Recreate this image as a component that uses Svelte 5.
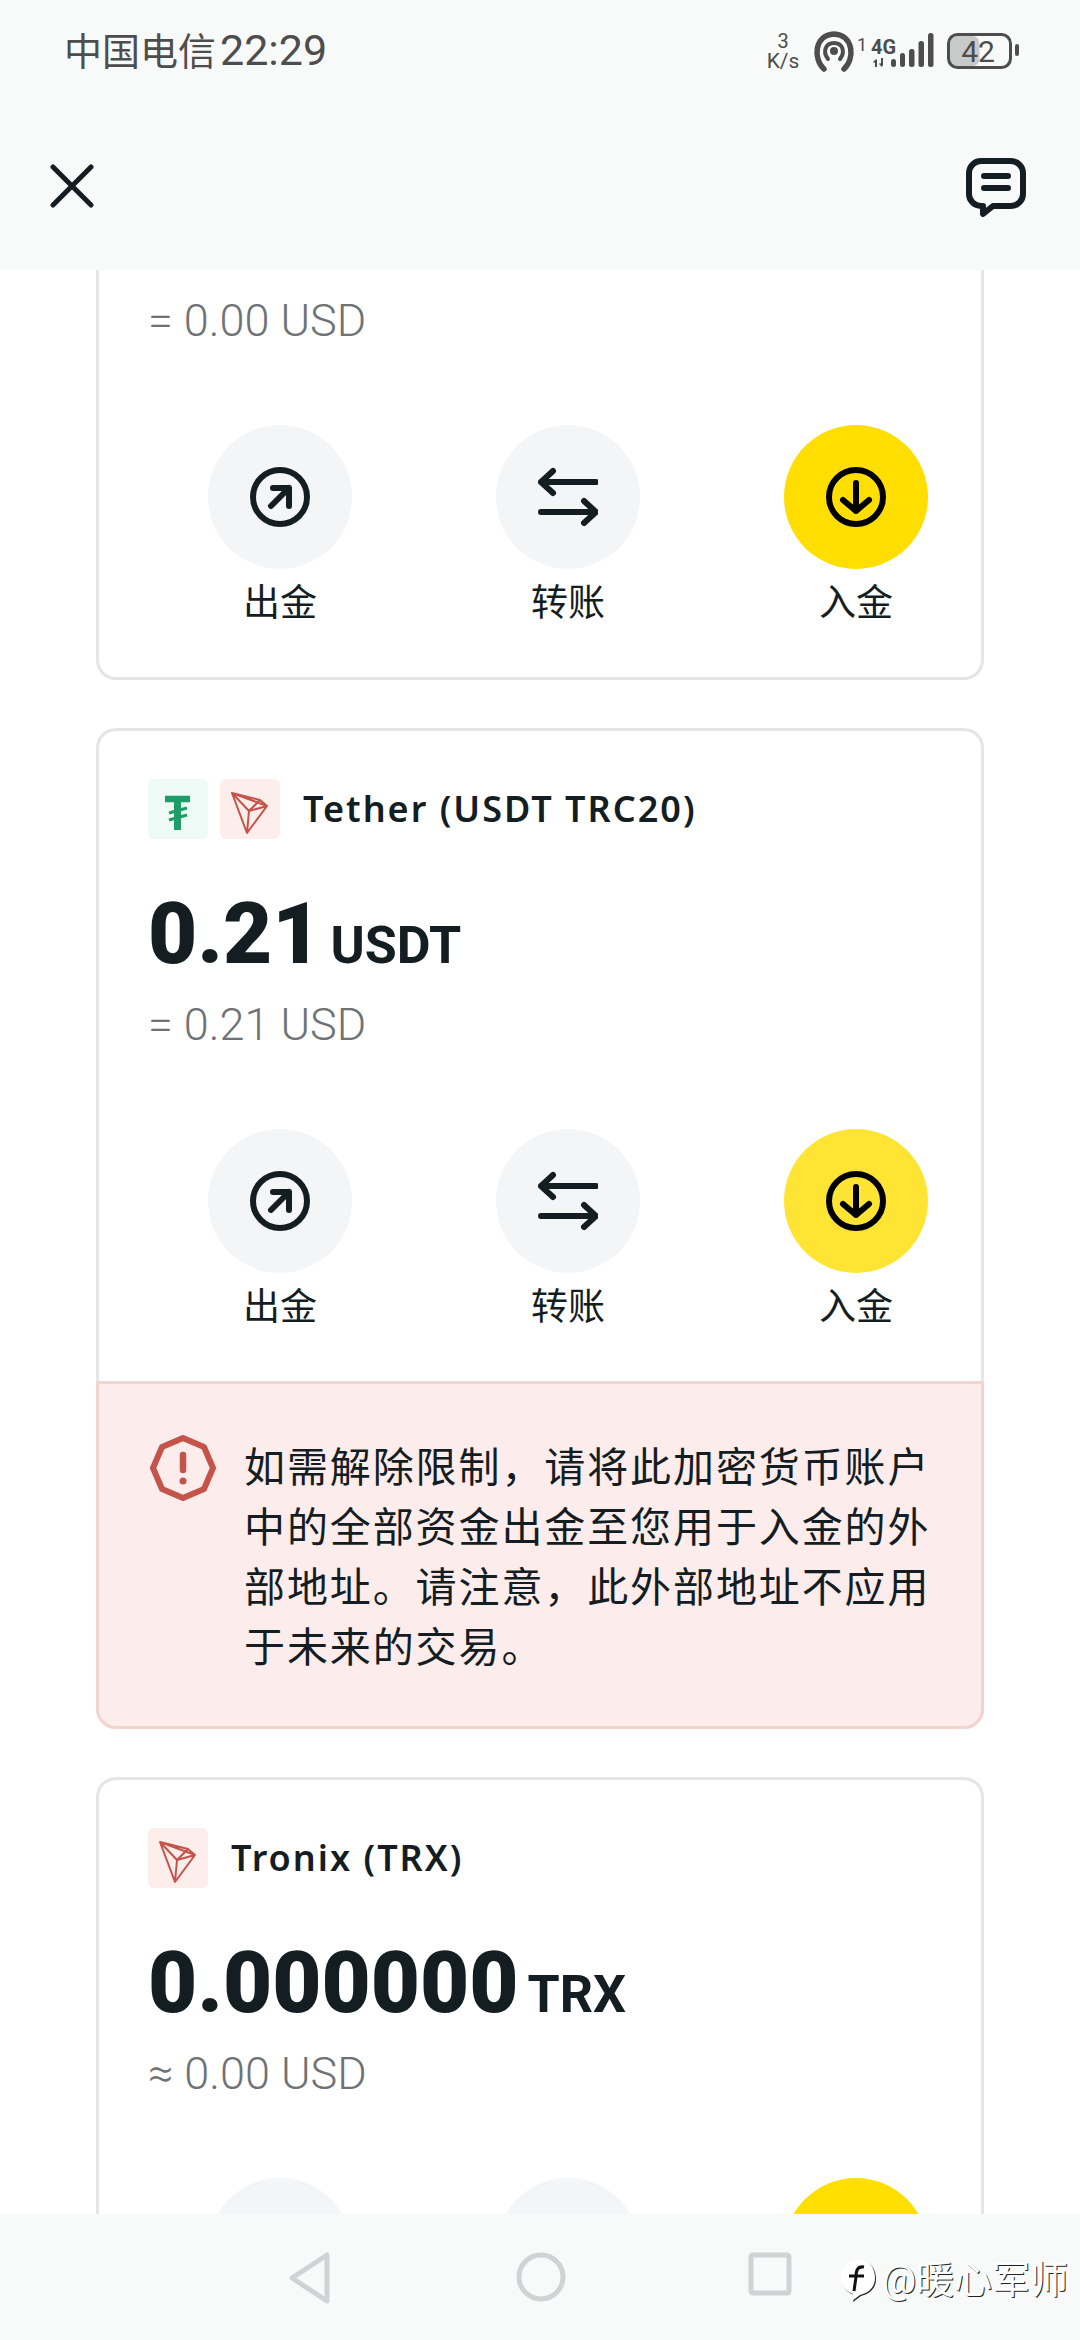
<script>
  const actions = [
    { label: '出金', kind: 'out' },
    { label: '转账', kind: 'swap' },
    { label: '入金', kind: 'in' }
  ];
</script>

{#snippet row(soft)}
  <div class="actions">
    {#each actions as a}
      <div class="action">
        <div class="circle" class:yellow={a.kind === 'in'} class:soft={a.kind === 'in' && soft}>
          <svg width="60" height="60" viewBox="0 0 60 60" fill="none" stroke={a.kind === 'in' ? '#000' : '#141d22'} stroke-width="6" stroke-linecap="round" stroke-linejoin="round">
            {#if a.kind === 'out'}
              <circle cx="30" cy="30" r="27" />
              <path d="M21 39 39 21M23 21h16v18" />
            {:else if a.kind === 'swap'}
              <path d="M3 15h55M15 4 3 15l12 11M58 45H3M46 34l12 11-12 11" />
            {:else}
              <circle cx="30" cy="30" r="27" />
              <path d="M30 16v28M17 33l13 11 13-11" />
            {/if}
          </svg>
        </div>
        <div class="label">{a.label}</div>
      </div>
    {/each}
  </div>
{/snippet}

{#snippet tron()}
  <div class="tile red">
    <svg width="60" height="60" viewBox="0 0 60 60" fill="none" stroke="#c4534a" stroke-width="2" stroke-linejoin="round">
      <path d="M12 14 47 27 27 54ZM12 14 29 32 27 54M29 32 47 27M29 32 40 21M12 14 40 21 47 27" />
    </svg>
  </div>
{/snippet}

<div class="page">
  <header class="top">
    <div class="status">
      <div class="carrier"><span class="cn">中国电信</span><span class="time">22:29</span></div>
      <svg class="sys" width="270" height="50" viewBox="0 0 270 50">
        <g fill="#4d4d4d" font-family="Roboto, sans-serif">
          <text x="32" y="19" font-size="20" text-anchor="middle">3</text>
          <text x="32" y="39" font-size="21" text-anchor="middle">K/s</text>
          <text x="106" y="22" font-size="18">1</text>
          <text x="120" y="25" font-size="20" font-weight="700" textLength="25" lengthAdjust="spacingAndGlyphs">4G</text>
          <text x="227" y="33" font-size="30" text-anchor="middle">42</text>
        </g>
        <g fill="none" stroke="#4d4d4d">
          <path d="M73 40C62 30 63 6 83 5 103 6 104 30 93 40" stroke-width="5.5" stroke-linecap="round" />
          <path d="M77 30C71 22 75 14 83 14 91 14 95 22 89 30" stroke-width="4" stroke-linecap="round" />
          <rect x="197.500" y="5.500" width="62" height="33" rx="9" stroke-width="3" />
        </g>
        <g fill="#4d4d4d">
          <circle cx="83" cy="22" r="4" />
          <rect x="140" y="30" width="5" height="8" rx="2.500" />
          <rect x="149" y="24" width="5" height="14" rx="2.500" />
          <rect x="158" y="20" width="5.500" height="18" rx="2.500" />
          <rect x="167.500" y="12" width="5.500" height="26" rx="2.500" />
          <rect x="177" y="4" width="5.500" height="34" rx="2.500" />
          <rect x="264" y="15" width="4" height="12" rx="2" />
          <path d="M124 31h2v7h-2zM122 33l3-3 1 1-3 3zM130 29h2v7h-2zM132 36l-1 2-3-3 1-1z" />
        </g>
        <rect x="199" y="7" width="29.500" height="30" rx="7" fill="#4d4d4d" opacity=".28" />
      </svg>
    </div>
    <div class="bar">
      <svg width="44" height="44" viewBox="0 0 44 44" fill="none" stroke="#141d22" stroke-width="5" stroke-linecap="round">
        <path d="M3 3 41 41M41 3 3 41" />
      </svg>
      <svg width="60" height="60" viewBox="0 0 60 60" fill="none">
        <path d="M15 3h30a12 12 0 0 1 12 12v21a12 12 0 0 1-12 12H27L17 56v-8h-2a12 12 0 0 1-12-12V15A12 12 0 0 1 15 3Z" stroke="#141d22" stroke-width="6" stroke-linejoin="round" />
        <rect x="15" y="15" width="30" height="6" rx="3" fill="#141d22" />
        <rect x="15" y="27" width="30" height="6" rx="3" fill="#141d22" />
      </svg>
    </div>
  </header>

  <main class="list">
    <section class="card clipped">
      <div class="body first">
        <div class="sub">= 0.00 USD</div>
        {@render row(false)}
      </div>
    </section>

    <section class="card joined">
      <div class="body">
        <div class="title-row">
          <div class="tile green">
            <svg width="60" height="60" viewBox="0 0 60 60" fill="none" stroke="#1f9d68">
              <path d="M17 20h25" stroke-width="6.500" />
              <path d="M29.500 20v31" stroke-width="7" />
              <path d="M21 34 39 29M21 41 39 36" stroke-width="3" />
            </svg>
          </div>
          {@render tron()}
          <h2 class="name">Tether (USDT TRC20)</h2>
        </div>
        <div class="amount"><b>0.21</b> <span>USDT</span></div>
        <div class="sub">= 0.21 USD</div>
        {@render row(true)}
      </div>
      <div class="alert">
        <svg class="warn" width="66" height="66" viewBox="0 0 66 66" fill="none" stroke="#c4534a" stroke-width="6" stroke-linejoin="round">
          <path d="M33 3 54 12 63 33 54 54 33 63 12 54 3 33 12 12Z" />
          <path d="M33 20V35" stroke-linecap="round" stroke-width="6.500" />
          <circle cx="33" cy="46" r="3.500" fill="#c4534a" stroke="none" />
        </svg>
        <p>如需解除限制，请将此加密货币账户中的全部资金出金至您用于入金的外部地址。请注意，此外部地址不应用于未来的交易。</p>
      </div>
    </section>

    <section class="card">
      <div class="body">
        <div class="title-row">
          {@render tron()}
          <h2 class="name">Tronix (TRX)</h2>
        </div>
        <div class="amount"><b>0.000000</b> <span>TRX</span></div>
        <div class="sub">≈ 0.00 USD</div>
        {@render row(false)}
      </div>
    </section>
  </main>

  <nav class="nav">
    <svg width="44" height="52" viewBox="0 0 44 52" fill="none" stroke="#d0d3d3" stroke-width="5" stroke-linejoin="round">
      <path d="M39 3V49L4 26Z" />
    </svg>
    <svg width="50" height="50" viewBox="0 0 50 50" fill="none" stroke="#d0d3d3" stroke-width="5">
      <circle cx="25" cy="25" r="22" />
    </svg>
    <svg width="44" height="44" viewBox="0 0 44 44" fill="none" stroke="#d0d3d3" stroke-width="5" stroke-linejoin="round">
      <rect x="3" y="3" width="38" height="38" rx="2" />
    </svg>
    <div class="mark">
      <svg class="bird" width="36" height="44" viewBox="0 0 36 44">
        <path d="M18 2C30 2 35 10 35 20 35 30 28 35 20 37L12 43 13 36C5 33 1 28 1 19 1 9 8 2 18 2Z" fill="#fff" />
        <path d="M24 9C17 8 16 13 16 19L14 33M9 18H24" fill="none" stroke="#111" stroke-width="3" />
      </svg>
      <span>@暖心军师</span>
    </div>
  </nav>
</div>

<style>
  :global(body) {
    margin: 0;
    background: #fff;
  }

  .page {
    width: 1080px;
    height: 2340px;
    display: flex;
    flex-direction: column;
    overflow: hidden;
    position: relative;
    font-family: Roboto, "Noto Sans CJK SC", sans-serif;
    color: #141d22;
  }

  .top {
    height: 270px;
    flex: none;
    background: #f8fafa;
  }

  .status {
    height: 105px;
    padding: 24px 59px 0 64px;
    box-sizing: border-box;
    display: flex;
    justify-content: space-between;
    align-items: flex-start;
  }

  .carrier {
    font-size: 43px;
    line-height: 52px;
    color: #4d4d4d;
    white-space: nowrap;
  }

  .carrier .cn {
    font-size: 38px;
  }

  .carrier .time {
    margin-left: 4px;
  }

  .sys {
    margin-top: 5px;
  }

  .bar {
    height: 165px;
    padding: 0 54px 0 50px;
    box-sizing: border-box;
    display: flex;
    justify-content: space-between;
    align-items: flex-start;
  }

  .bar svg:first-child {
    margin-top: 59px;
  }

  .bar svg:last-child {
    margin-top: 53px;
  }

  .list {
    flex: 1;
    min-height: 0;
    overflow: hidden;
    padding: 0 96px;
    display: flex;
    flex-direction: column;
    gap: 48px;
  }

  .card {
    flex: none;
    border: 3px solid #e3e5e7;
    border-radius: 20px;
    background: #fff;
  }

  .card.clipped {
    border-top: 0;
    border-top-left-radius: 0;
    border-top-right-radius: 0;
  }

  .body {
    padding: 48px 49px 48px;
  }

  .body.first {
    padding-top: 26px;
  }

  .title-row {
    display: flex;
    align-items: center;
    height: 60px;
    gap: 12px;
  }

  .tile {
    width: 60px;
    height: 60px;
    border-radius: 6px;
  }

  .tile svg {
    display: block;
  }

  .green {
    background: #eefaf5;
  }

  .red {
    background: #fdeeec;
  }

  .name {
    margin: -2px 0 0 11px;
    font-family: "Noto Sans", sans-serif;
    font-size: 36px;
    font-weight: 600;
    letter-spacing: 2px;
    white-space: nowrap;
  }

  .amount {
    height: 100px;
    margin: 45px 0 16px;
    line-height: 100px;
    white-space: nowrap;
    font-weight: 700;
  }

  .amount b {
    font-size: 85px;
  }

  .amount span {
    font-size: 52px;
    margin-left: 5px;
  }

  .sub {
    font-size: 45px;
    line-height: 50px;
    font-weight: 300;
    color: #6f7275;
  }

  .actions {
    margin: 79px 0 0 60px;
    display: grid;
    grid-template-columns: repeat(3, 144px);
    column-gap: 144px;
  }

  .action {
    display: flex;
    flex-direction: column;
    align-items: center;
  }

  .circle {
    width: 144px;
    height: 144px;
    border-radius: 50%;
    background: #f3f5f7;
    display: flex;
    align-items: center;
    justify-content: center;
  }

  .circle.yellow {
    background: #ffde00;
  }

  .circle.soft {
    background: #ffe433;
  }

  .label {
    margin-top: 10px;
    font-size: 37px;
    line-height: 50px;
    white-space: nowrap;
  }

  .joined {
    border-bottom: 0;
  }

  .alert {
    margin: 0 -3px;
    padding: 51px 30px 48px 51px;
    display: flex;
    gap: 28px;
    background: #fdecec;
    border: 3px solid #f3d3d0;
    border-radius: 0 0 20px 20px;
  }

  .warn {
    flex: none;
  }

  .alert p {
    margin: 3px 0 0;
    font-size: 41px;
    line-height: 60px;
    letter-spacing: 1.900px;
  }

  .nav {
    height: 126px;
    flex: none;
    background: #f8fafa;
    position: relative;
    display: grid;
    grid-template-columns: 288px 44px 184px 50px 182px 44px;
    padding-top: 38px;
    box-sizing: border-box;
    align-items: start;
  }

  .nav svg:nth-child(1) {
    grid-column: 2;
  }

  .nav svg:nth-child(2) {
    grid-column: 4;
  }

  .nav svg:nth-child(3) {
    grid-column: 6;
  }

  .mark {
    position: absolute;
    left: 840px;
    top: 44px;
    display: flex;
    align-items: center;
    gap: 6px;
  }

  .bird {
    filter: drop-shadow(1px 1px 0 #222);
  }

  .mark span {
    font-size: 38px;
    line-height: 44px;
    color: #fff;
    white-space: nowrap;
    text-shadow: 1px 1px 0 #222;
  }
</style>
